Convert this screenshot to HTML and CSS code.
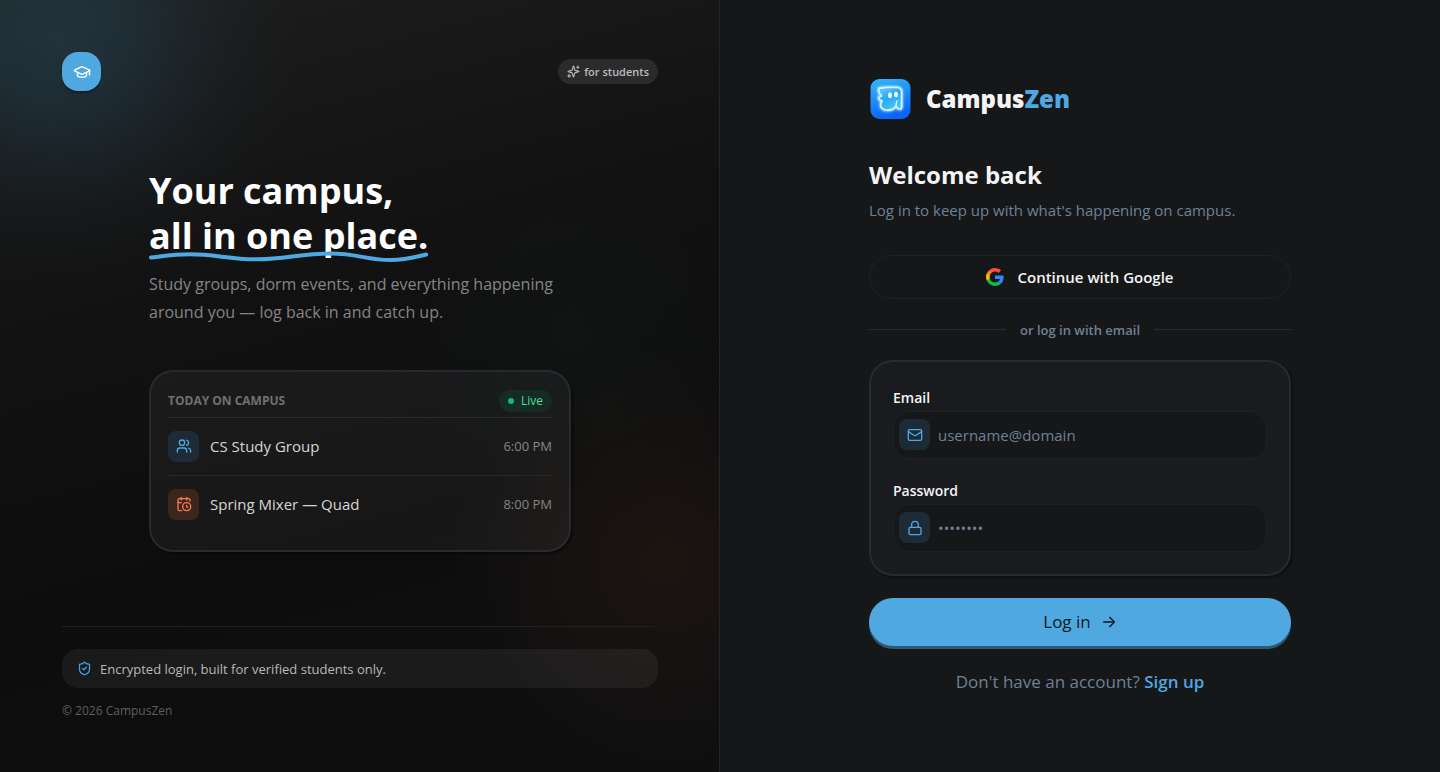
FILE: index.html
```html
<!DOCTYPE html>
<html lang="en">
<head>
<meta charset="utf-8">
<meta name="viewport" content="width=device-width, initial-scale=1">
<title>CampusZen – Log in</title>
<link rel="stylesheet" href="styles.css">
</head>
<body>
<div class="page">
  <section class="promo">
    <header class="promo-top">
      <div class="cap-badge">
        <svg class="icon icon-cap" viewBox="0 0 24 24"><path d="M21.42 10.922a1 1 0 0 0-.019-1.838L12.83 5.18a2 2 0 0 0-1.66 0L2.6 9.08a1 1 0 0 0 0 1.832l8.57 3.908a2 2 0 0 0 1.66 0z"/><path d="M22 10v6"/><path d="M6 12.5V16a6 3 0 0 0 12 0v-3.5"/></svg>
      </div>
      <div class="tag">
        <svg class="icon icon-spark" viewBox="0 0 24 24"><path d="M9.937 15.5A2 2 0 0 0 8.5 14.063l-6.135-1.582a.5.5 0 0 1 0-.962L8.5 9.936A2 2 0 0 0 9.937 8.5l1.582-6.135a.5.5 0 0 1 .963 0L14.063 8.5A2 2 0 0 0 15.5 9.937l6.135 1.581a.5.5 0 0 1 0 .964L15.5 14.063a2 2 0 0 0-1.437 1.437l-1.582 6.135a.5.5 0 0 1-.963 0z"/><path d="M20 2v4"/><path d="M22 4h-4"/><circle cx="4" cy="20" r="2"/></svg>
        <span>for students</span>
      </div>
    </header>

    <div class="promo-main">
      <h1 class="headline">Your campus,<br><span class="underlined">all in one place.<svg class="squiggle" viewBox="0 0 273 12" preserveAspectRatio="none"><path d="M2 6.5C15 5 26 3.300 40 3.300C65 3.300 78 8.300 106 8.300C134 8.300 147 2.500 178 2.500C203 2.500 213 9 236 9C252 9 260 6 271 3.500"/></svg></span></h1>
      <p class="lead">Study groups, dorm events, and everything happening around you — log back in and catch up.</p>
      <div class="today">
        <div class="today-head">
          <h2 class="today-title">TODAY ON CAMPUS</h2>
          <span class="live"><span class="live-dot"></span>Live</span>
        </div>
        <ul class="events">
          <li class="event">
            <span class="tile tile-blue"><svg class="icon icon-tile" viewBox="0 0 24 24"><path d="M16 21v-2a4 4 0 0 0-4-4H6a4 4 0 0 0-4 4v2"/><circle cx="9" cy="7" r="4"/><path d="M16 3.128a4 4 0 0 1 0 7.744"/><path d="M22 21v-2a4 4 0 0 0-3-3.870"/></svg></span>
            <span class="event-name">CS Study Group</span>
            <time class="event-time">6:00 PM</time>
          </li>
          <li class="event">
            <span class="tile tile-orange"><svg class="icon icon-tile" viewBox="0 0 24 24"><path d="M16 14v2.200l1.600 1"/><path d="M16 2v4"/><path d="M21 7.500V6a2 2 0 0 0-2-2H5a2 2 0 0 0-2 2v14a2 2 0 0 0 2 2h3.500"/><path d="M3 10h5"/><path d="M8 2v4"/><circle cx="16" cy="16" r="6"/></svg></span>
            <span class="event-name">Spring Mixer — Quad</span>
            <time class="event-time">8:00 PM</time>
          </li>
        </ul>
      </div>
    </div>

    <footer class="promo-foot">
      <div class="secure">
        <svg class="icon icon-shield" viewBox="0 0 24 24"><path d="M20 13c0 5-3.500 7.500-7.660 8.950a1 1 0 0 1-.67-.01C7.500 20.500 4 18 4 13V6a1 1 0 0 1 1-1c2 0 4.500-1.200 6.240-2.720a1.170 1.170 0 0 1 1.520 0C14.510 3.810 17 5 19 5a1 1 0 0 1 1 1z"/><path d="m9 12 2 2 4-4"/></svg>
        <span>Encrypted login, built for verified students only.</span>
      </div>
      <p class="copyright">© 2026 CampusZen</p>
    </footer>
  </section>

  <main class="login">
    <form class="login-box">
      <div class="brand">
        <svg class="brand-logo" viewBox="0 0 42 42">
          <defs>
            <linearGradient id="tile" x1="0" y1="0" x2="0.300" y2="1"><stop offset="0" stop-color="#35b8fb"/><stop offset="1" stop-color="#0a66f8"/></linearGradient>
            <linearGradient id="body" x1="0" y1="0" x2="0.500" y2="1"><stop offset="0" stop-color="#6fd3ff"/><stop offset="0.500" stop-color="#25a8f6"/><stop offset="1" stop-color="#4cc0fb"/></linearGradient>
            <filter id="glow" x="-30%" y="-30%" width="160%" height="160%"><feGaussianBlur stdDeviation="1.100"/></filter>
            <filter id="soft" x="-10%" y="-10%" width="120%" height="120%"><feGaussianBlur stdDeviation="0.500"/></filter>
          </defs>
          <rect x="1" y="1" width="40" height="40" rx="9" fill="url(#tile)"/>
          <path class="ghost-glow" filter="url(#glow)" d="M10.500 10C13 10.500 14 9.500 17 9.500H27C30.500 9.500 32 11.500 32 14.500V29C32 31.500 29 31.500 27.500 29.500C26.500 28 26 28 25 29.500C23 32.500 19 32 16.500 32C13 31.500 11 29 11.300 26.500C11.500 24.500 13 24 12.500 22.500C10 22.500 9 21 9.500 19.500C10.500 18.500 12 19 12 17.500C11 16.500 9.500 15.500 9.300 13C9.200 11 9.500 10 10.500 10Z"/>
          <g filter="url(#soft)">
            <path class="ghost" d="M10.500 10C13 10.500 14 9.500 17 9.500H27C30.500 9.500 32 11.500 32 14.500V29C32 31.500 29 31.500 27.500 29.500C26.500 28 26 28 25 29.500C23 32.500 19 32 16.500 32C13 31.500 11 29 11.300 26.500C11.500 24.500 13 24 12.500 22.500C10 22.500 9 21 9.500 19.500C10.500 18.500 12 19 12 17.500C11 16.500 9.500 15.500 9.300 13C9.200 11 9.500 10 10.500 10Z"/>
            <path d="M26 28.500C27 27 26.500 25 27.500 23" fill="none" stroke="#d5f4ff" stroke-width="1.400" stroke-linecap="round"/>
            <ellipse cx="20.500" cy="17.200" rx="1.900" ry="2.900" fill="#fff"/><ellipse cx="26.500" cy="16.500" rx="1.900" ry="2.800" fill="#fff"/>
          </g>
        </svg>
        <span class="brand-name">Campus<span class="brand-accent">Zen</span></span>
      </div>
      <h2 class="welcome">Welcome back</h2>
      <p class="sub">Log in to keep up with what's happening on campus.</p>

      <button class="google" type="button">
        <svg class="google-logo" viewBox="0 0 48 48"><defs><linearGradient id="warm" x1="0.800" y1="0" x2="0" y2="0.900"><stop offset="0" stop-color="#ff4641"/><stop offset="0.600" stop-color="#ff5a35"/><stop offset="1" stop-color="#ffc400"/></linearGradient></defs><path fill="url(#warm)" d="M24 9.500c3.540 0 6.710 1.220 9.210 3.600l6.850-6.850C35.900 2.380 30.470 0 24 0 14.620 0 6.510 5.380 2.560 13.220l7.980 6.190C12.430 13.720 17.740 9.500 24 9.500z"/><path fill="#3086ff" d="M46.980 24.550c0-1.570-.15-3.090-.38-4.550H24v9.020h12.940c-.58 2.960-2.260 5.480-4.780 7.180l7.730 6c4.510-4.180 7.090-10.360 7.090-17.650z"/><path fill="#fbbc05" d="M10.530 28.590c-.48-1.450-.76-2.990-.76-4.590s.27-3.140.76-4.590l-7.980-6.190C.92 16.460 0 20.120 0 24s.92 7.540 2.560 10.780z"/><path fill="#17b94b" d="M24 48c6.480 0 11.930-2.130 15.890-5.810l-7.730-6c-2.150 1.450-4.920 2.300-8.160 2.300-6.260 0-11.570-4.220-13.470-9.910l-7.980 6.190C6.510 42.620 14.620 48 24 48z"/></svg>
        <span>Continue with Google</span>
      </button>

      <div class="divider"><span>or log in with email</span></div>

      <div class="fields">
        <label class="label" for="email">Email</label>
        <div class="field">
          <span class="tile tile-blue"><svg class="icon icon-tile" viewBox="0 0 24 24"><rect x="2" y="4" width="20" height="16" rx="2"/><path d="m22 7-8.970 5.700a1.940 1.940 0 0 1-2.060 0L2 7"/></svg></span>
          <input class="input" id="email" type="email" placeholder="username@domain">
        </div>
        <label class="label label-next" for="password">Password</label>
        <div class="field">
          <span class="tile tile-blue"><svg class="icon icon-tile" viewBox="0 0 24 24"><rect x="3" y="11" width="18" height="11" rx="2"/><path d="M7 11V7a5 5 0 0 1 10 0v4"/></svg></span>
          <input class="input" id="password" type="password" placeholder="••••••••">
        </div>
      </div>

      <button class="submit" type="submit">
        <span>Log in</span>
        <svg class="icon icon-arrow" viewBox="0 0 24 24"><path d="M4 12h16"/><path d="m13 5 7 7-7 7"/></svg>
      </button>
      <p class="signup">Don't have an account? <a href="#">Sign up</a></p>
    </form>
  </main>
</div>
</body>
</html>
```
FILE: styles.css
```css
* { box-sizing: border-box; }

body {
  margin: 0;
  background: #151719;
  color: #f4f4f5;
  font-family: "Open Sans", "Noto Sans", sans-serif;
}

h1, h2, p, ul { margin: 0; padding: 0; }

ul { list-style: none; }

button, input { font-family: inherit; }

.page {
  display: grid;
  grid-template-columns: 1fr 1fr;
  min-height: 100vh;
}

.icon {
  flex: none;
  fill: none;
  stroke: currentColor;
  stroke-width: 2;
  stroke-linecap: round;
  stroke-linejoin: round;
}

/* Left panel */
.promo {
  display: flex;
  flex-direction: column;
  padding: 52px 61px 52px 62px;
  border-right: 1px solid #222427;
  background:
    radial-gradient(circle at 60px 40px, rgba(50, 130, 175, 0.220), rgba(50, 130, 175, 0.170) 70px, rgba(50, 130, 175, 0.070) 140px, rgba(50, 130, 175, 0.020) 190px, rgba(50, 130, 175, 0) 240px),
    radial-gradient(circle at 92% 72%, rgba(170, 95, 50, 0.090), rgba(170, 95, 50, 0.055) 90px, rgba(170, 95, 50, 0) 210px),
    radial-gradient(circle at 80% 45%, rgba(40, 160, 120, 0.030), rgba(40, 160, 120, 0) 160px),
    linear-gradient(165deg, #1e1e1e 0%, #121212 35%, #0d0d0e 65%, #0f0f10 100%);
}

.promo-top {
  display: flex;
  align-items: center;
  justify-content: space-between;
}

.cap-badge {
  display: grid;
  place-items: center;
  width: 39px;
  height: 39px;
  border-radius: 16px;
  background: #4fa8e0;
  box-shadow: 0 2px 2px rgba(0, 0, 0, 0.350);
  color: #fff;
}

.icon-cap { width: 18px; height: 18px; }

.tag {
  display: flex;
  align-items: center;
  gap: 4px;
  height: 25px;
  padding: 0 9px;
  border-radius: 13px;
  background: #2b2b2b;
  color: #bdbdbd;
  font-size: 11px;
  font-weight: 600;
}

.icon-spark { width: 13px; height: 13px; }

.promo-main {
  display: flex;
  flex: 1;
  flex-direction: column;
  justify-content: center;
  width: 100%;
  max-width: 422px;
  margin: 0 auto;
  padding-top: 2px;
}

.headline {
  color: #fff;
  font-size: 36px;
  font-weight: 700;
  line-height: 45px;
}

.underlined {
  position: relative;
  display: inline-block;
  white-space: nowrap;
}

.squiggle {
  position: absolute;
  bottom: -5px;
  left: 0;
  width: 100%;
  height: 12px;
  fill: none;
  overflow: visible;
  stroke: #4fa8e0;
  stroke-width: 4;
  stroke-linecap: round;
}

.lead {
  margin-top: 12px;
  color: #858585;
  font-size: 16px;
  line-height: 28px;
}

.today {
  margin-top: 44px;
  padding: 18px 17px 17px;
  border: 2px solid #292a31;
  border-radius: 24px;
  background: rgba(255, 255, 255, 0.045);
  box-shadow: 2px 2px 2px rgba(0, 0, 0, 0.400);
}

.today-head {
  display: flex;
  align-items: center;
  justify-content: space-between;
  padding-bottom: 5px;
  border-bottom: 1px solid #2b2b2b;
}

.today-title {
  color: #707070;
  font-size: 12px;
  font-weight: 700;
}

.live {
  display: flex;
  align-items: center;
  gap: 7px;
  height: 22px;
  padding: 0 9px;
  border-radius: 11px;
  background: #152b24;
  color: #4ade9f;
  font-size: 12px;
}

.live-dot {
  width: 6px;
  height: 6px;
  border-radius: 50%;
  background: #10b981;
}

.event {
  display: flex;
  align-items: center;
  gap: 11px;
  padding: 13px 0;
}

.event + .event { border-top: 1px solid #262626; }

.tile {
  display: grid;
  flex: none;
  place-items: center;
  width: 31px;
  height: 31px;
  border-radius: 8px;
}

.tile-blue { background: #1c2b35; color: #4fa8e0; }

.tile-orange { background: #3a261f; color: #ff7a4d; }

.icon-tile { width: 16px; height: 16px; }

.event-name {
  flex: 1;
  color: #d6d6d6;
  font-size: 15px;
}

.event-time {
  color: #858585;
  font-size: 13px;
}

.promo-foot {
  padding-top: 22px;
  border-top: 1px solid #202020;
}

.secure {
  display: flex;
  align-items: center;
  gap: 8px;
  min-height: 39px;
  padding: 0 15px;
  border-radius: 16px;
  background: rgba(255, 255, 255, 0.055);
  color: #b8b8b8;
  font-size: 13px;
}

.icon-shield { width: 15px; height: 15px; color: #38a8ee; }

.copyright {
  margin-top: 14px;
  color: #5f5f5f;
  font-size: 12px;
  line-height: 18px;
}

/* Right panel */
.login {
  display: flex;
  align-items: center;
  justify-content: center;
  padding: 24px;
  background: #151719;
}

.login-box {
  width: 100%;
  max-width: 422px;
}

.brand {
  display: flex;
  align-items: center;
  gap: 14px;
}

.brand-logo { width: 43px; height: 42px; }

.ghost { fill: url(#body); stroke: #d5f4ff; stroke-width: 1.600; }

.ghost-glow { fill: none; stroke: #c0efff; stroke-width: 3; }

.brand-name {
  font-size: 24px;
  font-weight: 800;
  line-height: 32px;
}

.brand-accent { color: #4fa8e0; }

.welcome {
  margin-top: 39px;
  font-size: 24px;
  font-weight: 700;
  line-height: 32px;
}

.sub {
  margin-top: 8px;
  color: #718096;
  font-size: 15px;
  line-height: 22px;
}

.google {
  display: flex;
  align-items: center;
  justify-content: center;
  gap: 13px;
  width: 100%;
  height: 44px;
  margin-top: 34px;
  border: 1px solid #202225;
  border-radius: 22px;
  background: #151719;
  color: #f4f4f5;
  font-size: 15px;
  font-weight: 600;
}

.google-logo { width: 18px; height: 18px; }

.divider {
  display: flex;
  align-items: center;
  gap: 14px;
  margin-top: 21px;
  color: #718096;
  font-size: 13px;
  font-weight: 600;
  line-height: 20px;
}

.divider::before,
.divider::after {
  flex: 1;
  height: 1px;
  background: #292c2f;
  content: "";
}

.fields {
  margin-top: 20px;
  padding: 26px 22px 22px;
  border: 2px solid #282a2f;
  border-radius: 24px;
  background: #191b1f;
  box-shadow: 2px 2px 2px rgba(0, 0, 0, 0.350);
}

.label {
  display: block;
  font-size: 14px;
  font-weight: 600;
  line-height: 20px;
}

.label-next { margin-top: 22px; }

.field {
  display: flex;
  align-items: center;
  height: 48px;
  margin-top: 3px;
  padding-left: 5px;
  border: 1px solid #1f2225;
  border-radius: 16px;
  background: #151719;
}

.input {
  flex: 1;
  min-width: 0;
  height: 100%;
  padding: 0 8px;
  border: 0;
  outline: 0;
  background: transparent;
  color: #f4f4f5;
  font-size: 15px;
}

.input::placeholder { color: #718096; opacity: 1; }

.submit {
  display: flex;
  align-items: center;
  justify-content: center;
  gap: 10px;
  width: 100%;
  height: 48px;
  margin-top: 22px;
  border: 0;
  border-radius: 24px;
  background: #4fa8e0;
  box-shadow: 0 3px 0 #2e5876;
  color: #101820;
  font-size: 17px;
  font-weight: 500;
}

.icon-arrow { width: 16px; height: 16px; }

.signup {
  margin-top: 23px;
  color: #718096;
  font-size: 17px;
  line-height: 26px;
  text-align: center;
}

.signup a {
  color: #4fa8e0;
  font-weight: 600;
  text-decoration: none;
}
```
